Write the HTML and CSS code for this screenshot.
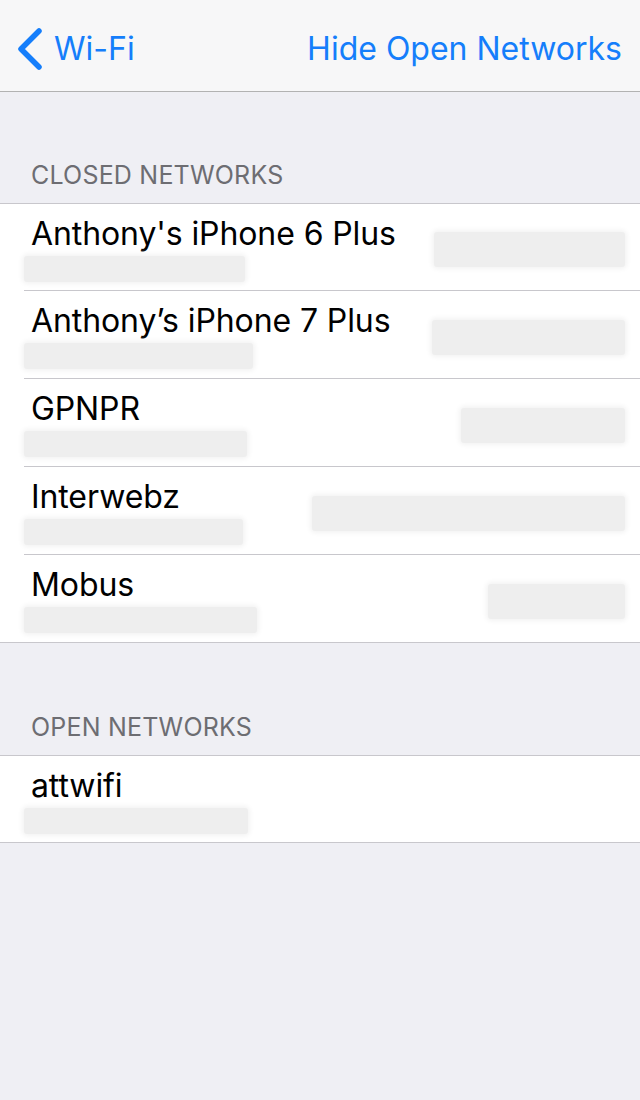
FILE: index.html
```html
<!DOCTYPE html>
<html>
<head>
<meta charset="utf-8">
<link rel="stylesheet" href="styles.css">
</head>
<body>
<div class="nav">
  <div class="back">
    <svg class="chev" width="30" height="44" viewBox="0 0 30 44"><path d="M24 4 L6 22 L24 40" fill="none" stroke="#157efb" stroke-width="5.5" stroke-linecap="round" stroke-linejoin="round"/></svg>
    <span>Wi-Fi</span>
  </div>
  <div class="action">Hide Open Networks</div>
</div>

<div class="section-header first">CLOSED NETWORKS</div>
<div class="group">
  <div class="row">
    <div class="info"><div class="title">Anthony's iPhone 6 Plus</div><div class="blur sub" style="width:221px"></div></div>
    <div class="blur right" style="width:191px"></div>
  </div>
  <div class="row">
    <div class="info"><div class="title">Anthony’s iPhone 7 Plus</div><div class="blur sub" style="width:229px"></div></div>
    <div class="blur right" style="width:193px"></div>
  </div>
  <div class="row">
    <div class="info"><div class="title">GPNPR</div><div class="blur sub" style="width:223px"></div></div>
    <div class="blur right" style="width:164px"></div>
  </div>
  <div class="row">
    <div class="info"><div class="title">Interwebz</div><div class="blur sub" style="width:219px"></div></div>
    <div class="blur right" style="width:313px"></div>
  </div>
  <div class="row">
    <div class="info"><div class="title">Mobus</div><div class="blur sub" style="width:233px"></div></div>
    <div class="blur right" style="width:137px"></div>
  </div>
</div>

<div class="section-header second">OPEN NETWORKS</div>
<div class="group">
  <div class="row">
    <div class="info"><div class="title">attwifi</div><div class="blur sub" style="width:224px"></div></div>
  </div>
</div>
</body>
</html>
```

FILE: styles.css
```css
html, body {
  margin: 0;
  padding: 0;
}
body {
  background: #efeff4;
  font-family: Inter, "Noto Sans", sans-serif;
  width: 640px;
  height: 1100px;
  overflow: hidden;
}
.nav {
  height: 92px;
  background: #f7f7f8;
  border-bottom: 1px solid #b2b2b2;
  box-sizing: border-box;
  display: flex;
  align-items: center;
  justify-content: space-between;
  padding: 6px 18px 0 15px;
  color: #157efb;
  font-size: 32px;
}
.back {
  display: flex;
  align-items: center;
  gap: 9px;
}
.chev {
  display: block;
}
.section-header {
  color: #6d6d72;
  font-size: 25px;
  letter-spacing: 0.2px;
  padding: 68px 31px 13px;
  line-height: 30px;
}
.section-header.second {
  padding-top: 69px;
}
.group {
  background: #fff;
  border-top: 1px solid #c8c7cc;
  border-bottom: 1px solid #c8c7cc;
}
.row {
  height: 87px;
  display: flex;
  align-items: center;
  justify-content: space-between;
  margin-left: 24px;
  padding-right: 15px;
  border-bottom: 1px solid #c8c7cc;
}
.row:first-child {
  height: 86px;
}
.row:last-child {
  border-bottom: none;
}
.info {
  display: flex;
  flex-direction: column;
}
.title {
  font-size: 32px;
  color: #000;
  line-height: 40px;
  padding-left: 7px;
  margin-top: 1px;
  letter-spacing: -0.1px;
}
.blur {
  background: #eeeeee;
  box-shadow: 0 0 5px 2px #f3f3f3;
  border-radius: 3px;
}
.sub {
  height: 26px;
  margin-top: 2px;
}
.right {
  height: 35px;
  margin-top: 5px;
}
```
